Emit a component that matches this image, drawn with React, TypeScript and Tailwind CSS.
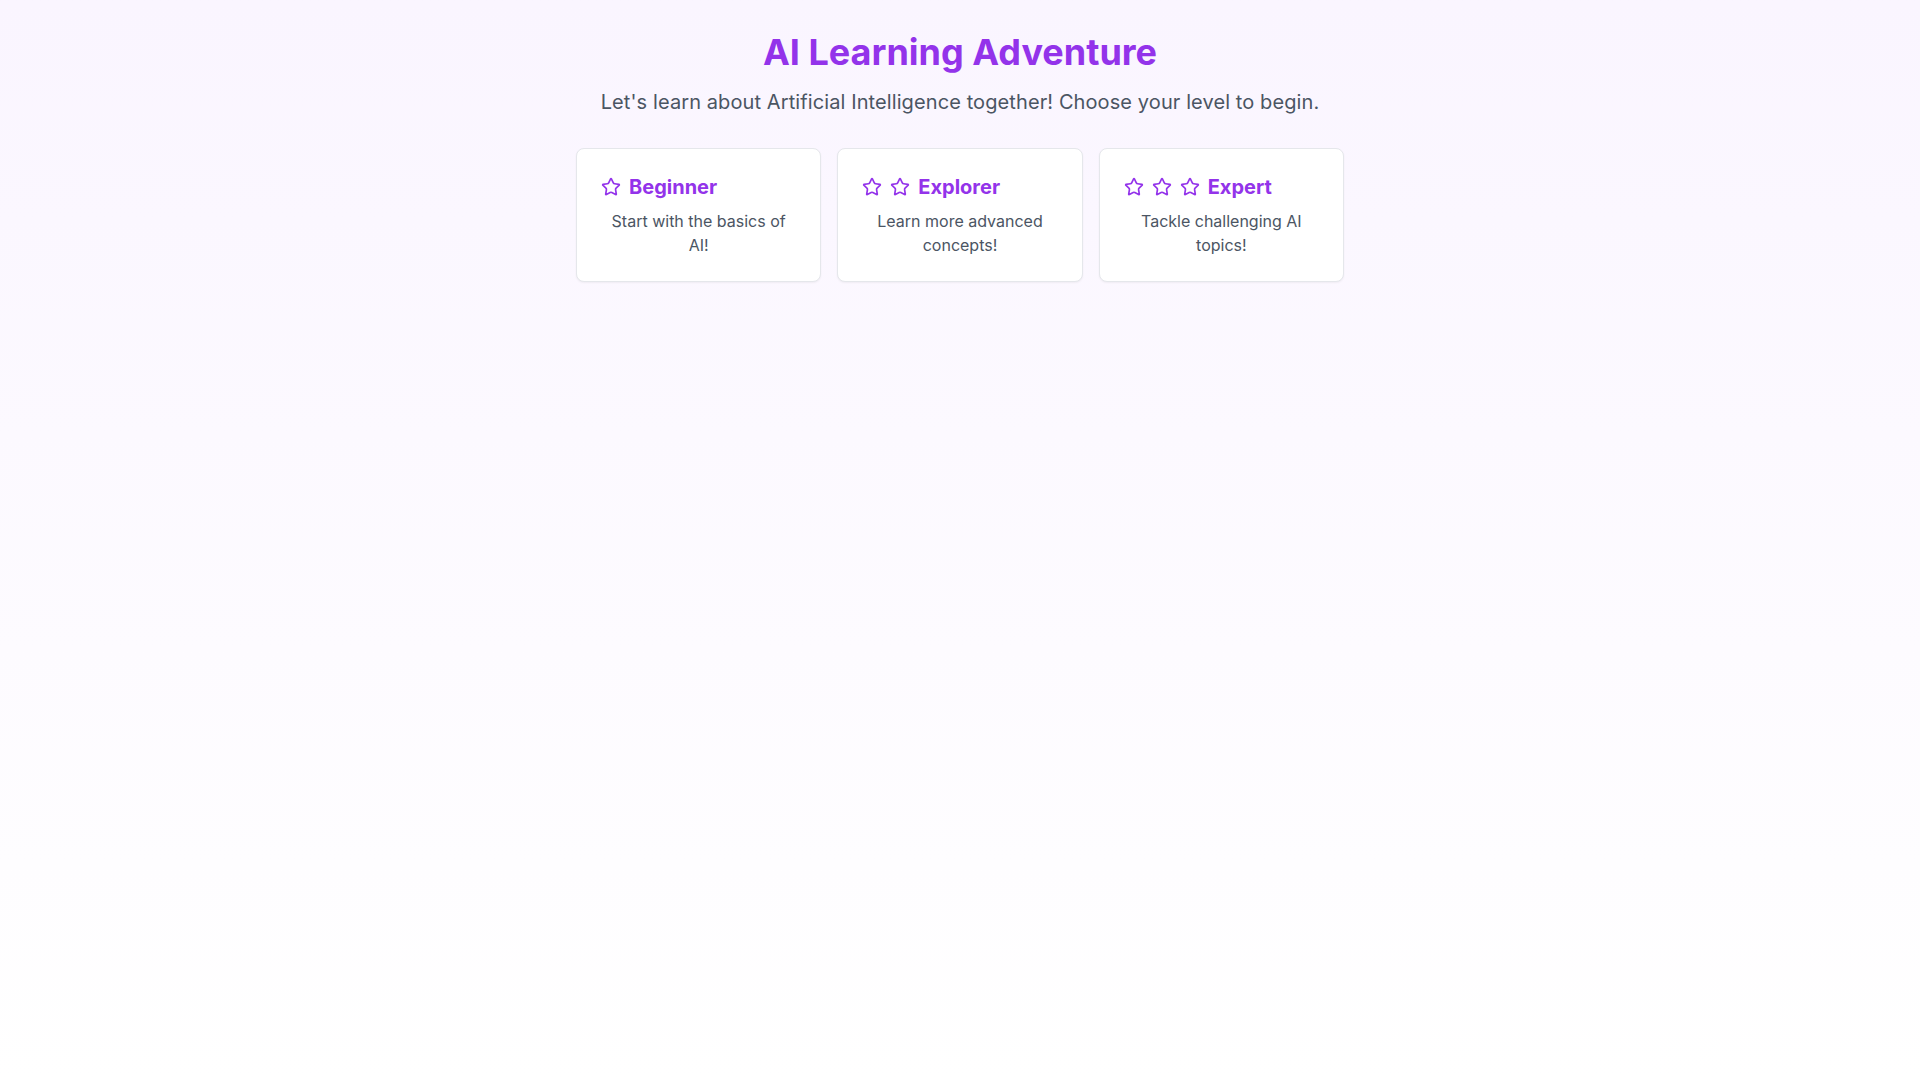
import React from "react";
import { Star } from "lucide-react";

const levels = [
  { title: "Beginner", stars: 1, desc: "Start with the basics of AI!" },
  { title: "Explorer", stars: 2, desc: "Learn more advanced concepts!" },
  { title: "Expert", stars: 3, desc: "Tackle challenging AI topics!" },
];

export default function App() {
  return (
    <div
      className="min-h-screen bg-gradient-to-b from-[#faf5ff] to-white pt-8"
      style={{ fontFamily: "Inter, 'Noto Sans', sans-serif" }}
    >
      <div className="max-w-3xl mx-auto">
        <h1 className="text-4xl font-bold text-[#9333ea] text-center mb-4">AI Learning Adventure</h1>
        <p className="text-xl text-[#4b5563] text-center mb-8 whitespace-nowrap tracking-[0.1px]">
          Let's learn about Artificial Intelligence together! Choose your level to begin.
        </p>
        <div className="grid grid-cols-3 gap-4">
          {levels.map((l) => (
            <div
              key={l.title}
              className="bg-white rounded-lg border border-[#e5e7eb] shadow-[0_1px_2px_0_rgba(0,0,0,0.05)] p-6"
            >
              <div className="flex items-center gap-2">
                {Array.from({ length: l.stars }).map((_, i) => (
                  <Star key={i} className="w-5 h-5 text-[#9333ea]" strokeWidth={2} />
                ))}
                <h2 className="text-xl font-bold text-[#9333ea]">{l.title}</h2>
              </div>
              <p className="mt-2 text-base text-[#4b5563] text-center">{l.desc}</p>
            </div>
          ))}
        </div>
      </div>
    </div>
  );
}
